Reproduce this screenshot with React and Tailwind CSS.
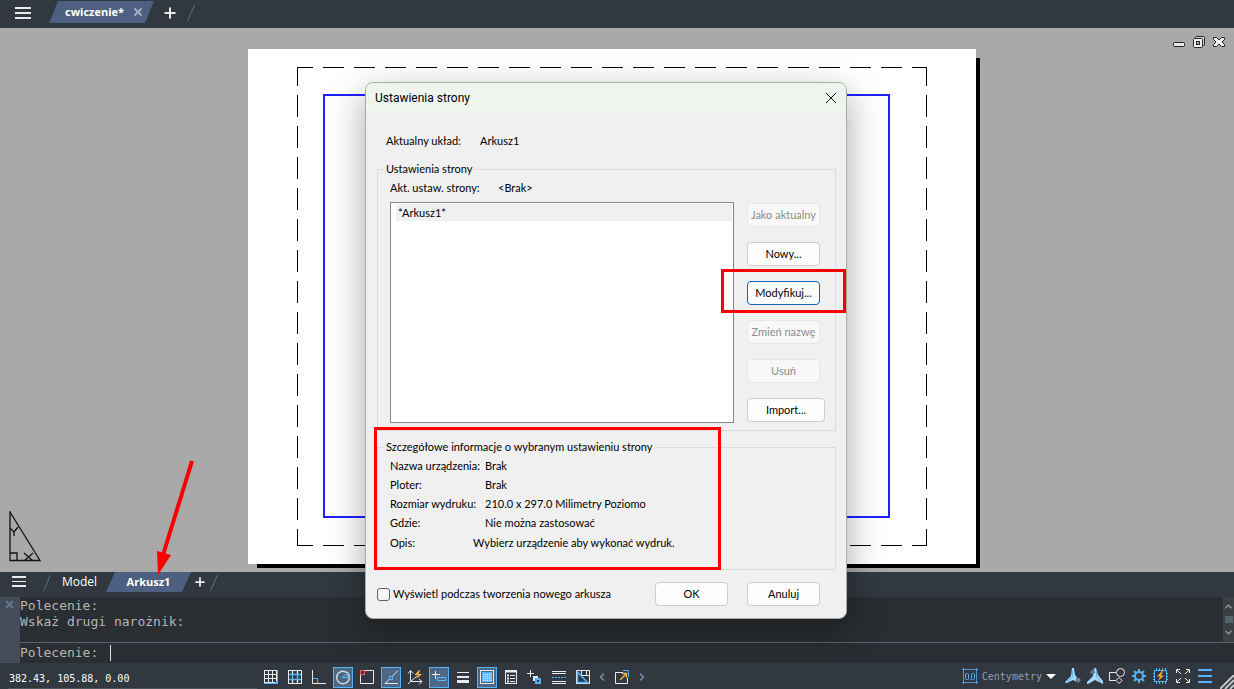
import { Plus, X, ChevronUp, ChevronDown, ChevronLeft, ChevronRight } from "lucide-react";

const WHITE = "#e8eaec";
const BLUE = "#55b4ff";

function Hamburger({ className }) {
  return (
    <svg viewBox="0 0 16 12" className={className} fill={WHITE} shapeRendering="crispEdges">
      <path d="M0 0h16v2H0zM0 5h16v2H0zM0 10h16v2H0z" />
    </svg>
  );
}

function Slash() {
  return (
    <svg viewBox="0 0 8 16" className="h-4 w-2" stroke="#5d7087" fill="none">
      <path d="M7.500 0L.5 16" />
    </svg>
  );
}

// File tabs along the top edge
function DocumentTabs() {
  return (
    <header className="flex h-7 shrink-0 items-start bg-[#31383f] pl-[15px]">
      <button type="button" aria-label="Menu" className="mt-[7px]">
        <Hamburger className="h-3 w-4" />
      </button>
      <div className="mt-px ml-[18px] flex h-[22px] items-center bg-[#4d6082] pr-[10px] pl-4 [clip-path:polygon(9px_0,100%_0,calc(100%-9px)_100%,0_100%)]">
        <button type="button" className="w-[65px] text-left font-['Open_Sans',sans-serif] text-[11px] leading-4 font-bold text-white">
          cwiczenie*
        </button>
        <button type="button" aria-label="Zamknij cwiczenie" className="ml-[2px] text-[#a5afbf]">
          <X size={12} strokeWidth={4} />
        </button>
      </div>
      <button type="button" aria-label="Nowy rysunek" className="mt-[5px] ml-[8px] text-[#e8eaec]">
        <Plus size={16} strokeWidth={3} />
      </button>
      <div className="mt-[5px] ml-[9px]">
        <Slash />
      </div>
    </header>
  );
}

function WindowControls() {
  return (
    <div className="absolute top-2 right-[9px] flex gap-2">
      <button type="button" aria-label="Minimalizuj">
        <svg viewBox="0 0 12 12" className="h-3 w-3">
          <rect x=".5" y="6.500" width="11" height="4" rx="1" fill="#e6e6ea" stroke="#25262b" />
        </svg>
      </button>
      <button type="button" aria-label="Przywróć">
        <svg viewBox="0 0 12 12" className="h-3 w-3" fill="#f0f0f4" stroke="#25262b">
          <rect x="2.500" y=".5" width="9" height="9" rx="1" fill="#cfd2dc" />
          <rect x=".5" y="2.500" width="9" height="9" rx="1" />
          <rect x="3.500" y="5.500" width="3" height="3" fill="#aaa" />
        </svg>
      </button>
      <button type="button" aria-label="Zamknij">
        <svg viewBox="0 0 12 12" className="h-3 w-3" fill="#f0f0f4" stroke="#25262b">
          <path d="M.5 1.500h3L6 4l2.500-2.500h3v2L9 6l2.500 2.500v2h-3L6 8l-2.500 2.500h-3v-2L3 6 .5 3.500z" />
        </svg>
      </button>
    </div>
  );
}

function UcsIcon() {
  return (
    <svg viewBox="0 0 34 52" className="absolute bottom-[9px] left-2 h-[52px] w-[34px]" fill="none" stroke="#111" strokeWidth="1.300">
      <path d="M2 1v48.500h30z" />
      <path d="M2 42h7v7.500" />
      <path d="M2 17l4 4 4-5M6 21v4M16 42l9 8M25 42l-9 8" />
    </svg>
  );
}

// Sheet, printable area and viewport frame
function Canvas() {
  return (
    <main className="relative flex-1 overflow-hidden bg-[#a9a9a9]">
      <div className="absolute top-[30px] left-[257px] h-[510px] w-[723px] bg-black" />
      <div className="absolute top-[21px] left-[248px] h-[515px] w-[728px] bg-white">
        <svg viewBox="0 0 728 515" className="h-full w-full" fill="none" shapeRendering="crispEdges">
          <g stroke="#000">
            <path d="M49 18.500H679M49 496.500H679" strokeDasharray="21 10" strokeDashoffset="5" />
            <path d="M49.500 18V497M678.500 18V497" strokeDasharray="22 9" strokeDashoffset="3" />
          </g>
          <rect x="76" y="46" width="565" height="422" stroke="#2020ff" strokeWidth="2" />
        </svg>
      </div>
      <WindowControls />
      <UcsIcon />
    </main>
  );
}

function LayoutTabs() {
  return (
    <nav className="flex h-[25px] shrink-0 items-start bg-[#31383f] pl-3 font-['Open_Sans',sans-serif] text-[11px] leading-5 text-white">
      <button type="button" aria-label="Lista arkuszy" className="mt-[4px]">
        <Hamburger className="h-[11px] w-[14px]" />
      </button>
      <div className="mt-[3px] ml-[17px]">
        <Slash />
      </div>
      <button type="button" className="ml-[11px] w-11 text-left text-xs leading-5">
        Model
      </button>
      <button type="button" className="h-5 w-[85px] bg-[#4d6082] font-bold [clip-path:polygon(9px_0,100%_0,calc(100%-9px)_100%,0_100%)]">
        Arkusz1
      </button>
      <button type="button" aria-label="Nowy arkusz" className="mt-[3px] ml-[2px] text-[#e8eaec]">
        <Plus size={14} strokeWidth={3} />
      </button>
      <div className="mt-[3px] ml-[3px]">
        <Slash />
      </div>
    </nav>
  );
}

function CommandPanel() {
  return (
    <section className="flex h-[66px] shrink-0 bg-[#2a2d31] font-['DejaVu_Sans_Mono',monospace] text-[13px] leading-4 text-[#b4b6b8]">
      <div className="w-5 bg-[#454c59] pt-[2px] pl-1">
        <button type="button" aria-label="Zamknij wiersz poleceń" className="block text-[#66788c]">
          <X size={11} strokeWidth={4} />
        </button>
      </div>
      <div className="flex flex-1 flex-col">
        <div className="flex h-[46px] border-b border-[#58646a]">
          <div className="flex-1 pt-px">
            <p>Polecenie:</p>
            <p>Wskaż drugi narożnik:</p>
          </div>
          <div className="flex w-[11px] flex-col items-center justify-between bg-[#3b3f42] py-1 text-[#9aa0a4]">
            <ChevronUp size={11} strokeWidth={3} />
            <span className="h-[7px] w-2 bg-[#58646c]" />
            <ChevronDown size={11} strokeWidth={3} />
          </div>
        </div>
        <div className="flex flex-1 items-center">
          <label htmlFor="command">Polecenie:</label>
          <span className="ml-3 h-4 w-px bg-[#dedede]" />
          <input id="command" type="text" className="ml-1 flex-1 bg-transparent outline-none" />
        </div>
      </div>
    </section>
  );
}

function Tool({ label, active, children }) {
  return (
    <button
      type="button"
      aria-label={label}
      className={`flex h-[21px] w-5 items-center justify-center border ${
        active ? "border-[#55b4ff] bg-[#4d6884]" : "border-transparent"
      }`}
    >
      <svg viewBox="0 0 16 16" className="h-4 w-4 shrink-0" fill="none" stroke={WHITE}>
        {children}
      </svg>
    </button>
  );
}

function DraftingTools() {
  return (
    <div className="flex gap-1">
      <Tool label="Skok">
        <path d="M1.500 1v13M5.500 1v13M9.500 1v13M1 1.500h12M1 5.500h12M1 9.500h12" />
        <path d="M14 1v13M1 14h14" stroke={BLUE} strokeWidth="2" />
        <path d="M1 13.500h11M13.500 1v11" />
      </Tool>
      <Tool label="Siatka">
        <path d="M5.500 1v13M10.500 1v13M1 5.500h14M1 10.500h14" stroke={BLUE} strokeWidth="1.500" />
        <rect x="1.500" y="1.500" width="13" height="13" />
        <path d="M5.500 2v3M10.500 2v3M5.500 11v3M10.500 11v3" />
      </Tool>
      <Tool label="Orto">
        <path d="M1.500 1v13.500H15" />
        <path d="M2 9.500h4.500V14" stroke={BLUE} />
      </Tool>
      <Tool label="Biegunowe" active>
        <circle cx="8" cy="8.500" r="6.300" stroke="#d5d8db" strokeWidth="1.500" />
        <path d="M14 3L7 8.500h8M11 5c1 1 1.500 2 1.500 3.500" stroke={BLUE} />
      </Tool>
      <Tool label="Lokalizacja">
        <path d="M5 1.500h9.500v13h-13V6" />
        <rect x="1.500" y="1.500" width="4" height="4" stroke="#ee6a5d" />
      </Tool>
      <Tool label="Śledzenie lokalizacji" active>
        <path d="M15 1.500L2 14.500h13" />
        <rect x="6.500" y="7.500" width="3" height="3" stroke={BLUE} fill="#4d6884" />
      </Tool>
      <Tool label="Dynamiczny LUW">
        <path d="M3.500 2v10.500H15M1 4.500l2.500-3 2.500 3M12 10l3 2.500-3 3M3.500 12.500L10 7M1 15l2.500-2.500" />
        <path d="M12 1L7.500 6H11l-1.500 4L15 5h-3.500L13 1z" fill="#f5b34c" stroke="none" />
      </Tool>
      <Tool label="Dynamiczne wprowadzanie" active>
        <path d="M1 5.500h8M4.500 2v8" />
        <rect x="6.500" y="8.500" width="8" height="3" stroke={BLUE} />
      </Tool>
      <Tool label="Grubość linii">
        <path d="M2 3.500h12" />
        <path d="M2 8h12" strokeWidth="2" />
        <path d="M2 12.500h12" strokeWidth="3" />
      </Tool>
      <Tool label="Przezroczystość" active>
        <rect x="1.500" y="1.500" width="13" height="13" />
        <rect x="3.500" y="3.500" width="9" height="9" fill="#72c0fb" stroke={BLUE} />
        <path d="M4 5.500h9M4 7.500h9M4 9.500h9M4 11.500h9" stroke="#c8e4fb" strokeDasharray="1 1" />
      </Tool>
      <Tool label="Szybkie właściwości">
        <rect x="2.500" y="1.500" width="11" height="13" />
        <path d="M2 2.500h12" strokeWidth="2" />
        <path d="M4 6.500h2M4 9.500h2M4 12.500h2" strokeWidth="2" />
        <path d="M7 6.500h5M7 9.500h5M7 12.500h5" />
      </Tool>
      <Tool label="Wybór cykliczny">
        <path d="M0 4.500h7M3.500 1v7" />
        <rect x="6" y="7" width="5" height="5" fill={WHITE} stroke="none" />
        <rect x="9" y="10" width="4" height="4" strokeWidth="2" stroke={BLUE} fill="#31383f" />
      </Tool>
      <Tool label="Monitor opisów">
        <path d="M1 2.500h14M1 4.500h14M1 12.500h14M1 14.500h14" />
        <path d="M1 8.500h14" stroke={BLUE} strokeDasharray="2 1" />
      </Tool>
      <Tool label="Szkic">
        <rect x="1.500" y="1.500" width="13" height="13" />
        <path d="M6.500 1v6M11.500 1v6M7 6.500h8" />
        <path d="M2.500 3l10 10.500h-10z" stroke={BLUE} strokeWidth="1.500" />
      </Tool>
    </div>
  );
}

function StatusIcon({ label, children }) {
  return (
    <button type="button" aria-label={label}>
      <svg viewBox="0 0 16 16" className="h-4 w-4" fill="none" stroke={WHITE}>
        {children}
      </svg>
    </button>
  );
}

function StatusBar() {
  return (
    <footer className="relative flex h-[26px] shrink-0 items-center bg-[#31383f] font-['DejaVu_Sans_Mono',monospace] text-[10px]">
      <div className="ml-2 flex h-full w-[249px] items-center border-b border-[#4b545c] pt-[5px] pl-px text-white">
        382.43, 105.88, 0.00
      </div>
      <div className="ml-1 flex items-center pt-[2px]">
        <DraftingTools />
        <button type="button" aria-label="Poprzedni" className="ml-[3px] text-[#7f8fa6]">
          <ChevronLeft size={12} strokeWidth={3} />
        </button>
        <button type="button" aria-label="Otwórz arkusz" className="ml-[6px]">
          <svg viewBox="0 0 16 16" className="h-4 w-4" fill="none" stroke={WHITE}>
            <path d="M9 3.500H1.500v11h12V9" />
            <path d="M9 1.500h5.500V8" stroke={BLUE} />
            <path d="M6 11l6-6M8 4.500h4.500V9" stroke="#f5b34c" strokeWidth="1.300" />
          </svg>
        </button>
        <button type="button" aria-label="Następny" className="ml-[6px] text-[#7f8fa6]">
          <ChevronRight size={12} strokeWidth={3} />
        </button>
      </div>
      <div className="mr-[21px] ml-auto flex items-center gap-[6px]">
        <button type="button" className="mr-[3px] flex items-center gap-1 text-[#8f9db5]">
          <svg viewBox="0 0 16 16" className="h-4 w-4" fill="none" stroke={BLUE}>
            <path d="M1.500 0v16M14.500 0v16M0 1.500h16M0 14.500h16" opacity=".75" />
            <rect x="3.500" y="5.500" width="3" height="6" rx="1" />
            <rect x="9.500" y="5.500" width="3" height="6" rx="1" />
            <path d="M7.500 11.500h1" />
          </svg>
          Centymetry
          <svg viewBox="0 0 10 5" className="h-[5px] w-[10px]" fill="#fff">
            <path d="M0 0h10L5 5z" />
          </svg>
        </button>
        <StatusIcon label="Skala opisu">
          <path d="M7 0h2l1 7 4 5v3l-6-3-6 3H0l1-2 5-5z" fill="#a5d8fb" stroke="none" />
          <path d="M7.500 3v6L2 14" stroke="#5ab5f2" />
          <circle cx="13.500" cy="12" r="2.300" fill="#7590ad" stroke="#31383f" strokeWidth=".6" />
        </StatusIcon>
        <StatusIcon label="Automatyczna skala">
          <path d="M7 0h2l2 7 5 6v3l-8-4-7 4H0v-2l6-6z" fill="#a5d8fb" stroke="none" />
          <path d="M9.500 3v6L14 14" stroke="#5ab5f2" />
          <path d="M6 1L2 5h3L2 9l6-5H5l3-3z" fill="#8194ac" stroke="#31383f" strokeWidth=".5" />
        </StatusIcon>
        <StatusIcon label="Widoczność">
          <path d="M7 4.500H.5v8H7" />
          <circle cx="11.500" cy="4.500" r="4" />
          <path d="M10 9.500l3 3-3 3-3-3z" />
        </StatusIcon>
        <StatusIcon label="Ustawienia">
          <circle cx="8" cy="8" r="4" stroke={BLUE} strokeWidth="2" />
          <path d="M8 1v3M8 12v3M1 8h3M12 8h3M3 3l2 2M11 11l2 2M13 3l-2 2M5 11l-2 2" stroke={BLUE} strokeWidth="2" />
        </StatusIcon>
        <StatusIcon label="Przyspieszenie sprzętowe">
          <rect x="1.500" y="2.500" width="12" height="11" stroke={BLUE} />
          <path d="M3.500 0v3M6.500 0v3M9.500 0v3M12.500 0v3M3.500 13v3M6.500 13v3M9.500 13v3M12.500 13v3M0 5.500h2M0 8.500h2M0 11.500h2M13 5.500h2M13 8.500h2M13 11.500h2" stroke={BLUE} />
          <path d="M9 3L4 8.500h3L5 13l6-5.500H8L10 3z" fill="#f5a742" stroke="none" />
        </StatusIcon>
        <StatusIcon label="Pełny ekran">
          <path d="M1.500 5V1.500H5M11 1.500h3.500V5M14.500 11v3.500H11M5 14.500H1.500V11" />
          <path d="M2 2l4 4M14 2l-4 4M14 14l-4-4M2 14l4-4" />
        </StatusIcon>
        <StatusIcon label="Dostosuj">
          <path d="M1 2h14M1 8h14M1 14h14" stroke={BLUE} strokeWidth="2" />
        </StatusIcon>
      </div>
      <svg viewBox="0 0 14 14" className="absolute right-0 bottom-0 h-[14px] w-[14px]" stroke="#c4c4c4" strokeWidth="2">
        <path d="M0 14L14 0M5 14l9-9M10 14l4-4" />
      </svg>
    </footer>
  );
}

const actions = [
  { label: "Jako aktualny", disabled: true },
  { label: "Nowy..." },
  { label: "Modyfikuj...", focused: true },
  { label: "Zmień nazwę", disabled: true },
  { label: "Usuń", disabled: true },
  { label: "Import...", wide: true },
];

const details = [
  ["Nazwa urządzenia:", "Brak"],
  ["Ploter:", "Brak"],
  ["Rozmiar wydruku:", "210.0 x 297.0 Milimetry Poziomo"],
  ["Gdzie:", "Nie można zastosować"],
];

function DialogButton({ label, disabled, focused, wide }) {
  const tone = disabled
    ? "border-[#e6e6e6] bg-[#f8f8f8] text-[#8c8c8c]"
    : focused
      ? "border-[#1067b4] bg-[#fdfdfd]"
      : "border-[#cdcdcd] bg-[#fdfdfd]";
  return (
    <button
      type="button"
      disabled={disabled}
      className={`h-6 rounded border whitespace-nowrap ${wide ? "w-[78px]" : "w-[73px]"} ${tone}`}
    >
      {label}
    </button>
  );
}

function PageSetupDialog() {
  return (
    <div
      role="dialog"
      aria-labelledby="dialog-title"
      className="absolute top-[82px] left-[365px] w-[482px] overflow-hidden rounded-lg border border-[#a9aba9] bg-[#f0f0f0] font-[Lato,sans-serif] text-[11px] leading-4 text-black shadow-[0_12px_36px_rgba(0,0,0,0.35)]"
    >
      <div className="flex h-[29px] items-center justify-between bg-[#eef5ee] pr-[9px] pl-[9px]">
        <h1 id="dialog-title" className="font-[Roboto,sans-serif] text-xs">
          Ustawienia strony
        </h1>
        <button type="button" aria-label="Zamknij">
          <svg viewBox="0 0 12 12" className="h-3 w-3" stroke="#111">
            <path d="M1 1l10 10M11 1L1 11" />
          </svg>
        </button>
      </div>

      <div className="pt-[21px] pr-[10px] pb-3 pl-[11px]">
        <div className="flex pl-[9px]">
          <span className="w-[94px]">Aktualny układ:</span>
          <span>Arkusz1</span>
        </div>

        <fieldset className="mt-3 border border-[#dcdcdc] pr-[10px] pb-[7px] pl-3">
          <legend className="-ml-[6px] px-[2px]">Ustawienia strony</legend>
          <div className="flex pt-[3px]">
            <span className="w-[108px]">Akt. ustaw. strony:</span>
            <span>&lt;Brak&gt;</span>
          </div>
          <div className="mt-[6px] flex gap-[13px]">
            <ul role="listbox" aria-label="Ustawienia strony" className="flex-1 border border-[#828790] bg-white py-px pr-px pl-[5px]">
              <li role="option" aria-selected="true" className="bg-[#f0f0f0] px-[2px] leading-[17px]">
                *Arkusz1*
              </li>
            </ul>
            <div className="flex w-[78px] flex-col gap-[15px] py-px">
              {actions.map((action) => (
                <DialogButton key={action.label} {...action} />
              ))}
            </div>
          </div>
        </fieldset>

        <fieldset className="mt-2 border border-[#dcdcdc] pb-[18px] pl-3">
          <legend className="-ml-[6px] px-[2px]">Szczegółowe informacje o wybranym ustawieniu strony</legend>
          <dl className="flex flex-col gap-[3px] pt-[3px]">
            {details.map(([term, value]) => (
              <div key={term} className="flex">
                <dt className="w-[95px]">{term}</dt>
                <dd>{value}</dd>
              </div>
            ))}
            <div className="mt-px flex">
              <dt className="w-[83px]">Opis:</dt>
              <dd>Wybierz urządzenie aby wykonać wydruk.</dd>
            </div>
          </dl>
        </fieldset>

        <div className="mt-3 flex items-center pr-4">
          <label className="mr-auto flex items-center gap-[3px]">
            <input type="checkbox" className="h-[13px] w-[13px] appearance-none rounded-[3px] border border-[#5f6266] bg-[#f6f6f6]" />
            Wyświetl podczas tworzenia nowego arkusza
          </label>
          <div className="flex gap-[19px]">
            <DialogButton label="OK" />
            <DialogButton label="Anuluj" />
          </div>
        </div>
      </div>
    </div>
  );
}

// Red frames and arrow drawn over the program window
function Annotations() {
  return (
    <div className="pointer-events-none">
      <div className="absolute top-[269px] left-[721px] h-11 w-[125px] border-3 border-[#ff0000]" />
      <div className="absolute top-[427px] left-[374px] h-[143px] w-[347px] border-3 border-[#ff0000]" />
      <svg viewBox="0 0 46 116" className="absolute top-[460px] left-[150px] h-[116px] w-[46px]" fill="#ff0000">
        <path d="M42 1L13 95" stroke="#ff0000" strokeWidth="4" />
        <path d="M7 91l14 4L8 115z" />
      </svg>
    </div>
  );
}

export default function App() {
  return (
    <div className="relative flex min-h-screen flex-col overflow-hidden">
      <DocumentTabs />
      <Canvas />
      <LayoutTabs />
      <CommandPanel />
      <StatusBar />
      <PageSetupDialog />
      <Annotations />
    </div>
  );
}
